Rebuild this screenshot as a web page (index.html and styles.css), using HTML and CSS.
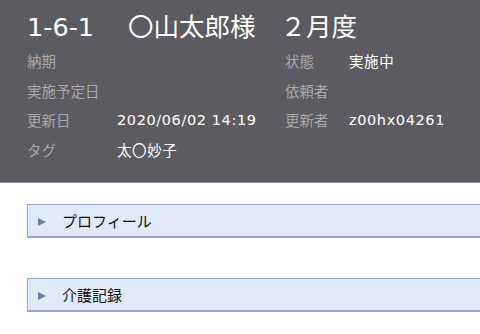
FILE: index.html
```html
<!DOCTYPE html>
<html lang="ja">
<head>
<meta charset="utf-8">
<link rel="stylesheet" href="styles.css">
</head>
<body>
<header class="head">
  <h1 class="title"><span class="t-id">1-6-1</span><span class="t-name">〇山太郎様</span><span class="t-month">２月度</span></h1>
  <div class="grid">
    <span class="lbl">納期</span><span class="val"></span>
    <span class="lbl">状態</span><span class="val">実施中</span>
    <span class="lbl">実施予定日</span><span class="val"></span>
    <span class="lbl">依頼者</span><span class="val"></span>
    <span class="lbl">更新日</span><span class="val">2020/06/02 14:19</span>
    <span class="lbl">更新者</span><span class="val">z00hx04261</span>
    <span class="lbl">タグ</span><span class="val">太〇妙子</span>
    <span class="lbl"></span><span class="val"></span>
  </div>
</header>
<main class="panels">
  <div class="panel"><span class="tri"></span><span class="ptext">プロフィール</span></div>
  <div class="panel"><span class="tri"></span><span class="ptext">介護記録</span></div>
</main>
</body>
</html>
```
FILE: styles.css
```css
html, body {
  margin: 0;
  padding: 0;
  overflow: hidden;
  background: #ffffff;
  font-family: "DejaVu Sans", "Noto Sans CJK JP", sans-serif;
}
.head {
  background: #5b5b61;
  border-bottom: 1px solid #8c8c90;
  padding: 9px 0 13px 27px;
  height: 160px;
}
.title {
  margin: 0 0 1px 0;
  font-size: 25.5px;
  font-weight: normal;
  line-height: 36px;
  color: #ffffff;
  white-space: nowrap;
  display: flex;
}
.t-name {
  margin-left: 34px;
}
.t-month {
  margin-left: 25px;
}
.grid {
  display: grid;
  grid-template-columns: 90px 168px 64px 1fr;
  grid-auto-rows: 29.5px;
  align-items: center;
  font-size: 14.5px;
}
.lbl {
  color: #a8a8ac;
  white-space: nowrap;
}
.val {
  color: #ffffff;
  white-space: nowrap;
  letter-spacing: 0.6px;
}
.panels {
  padding: 21px 0 0 27px;
  display: flex;
  flex-direction: column;
  gap: 40px;
}
.panel {
  margin-right: -10px;
  height: 31px;
  background: #e2e9f6;
  border-top: 1px solid #93a8d3;
  border-left: 1px solid #93a8d3;
  border-bottom: 2px solid #95a7cf;
  display: flex;
  align-items: center;
  padding-left: 10px;
  gap: 16px;
}
.tri {
  width: 0;
  height: 0;
  border-top: 4.5px solid transparent;
  border-bottom: 4.5px solid transparent;
  border-left: 8px solid #6e7fa3;
  margin-top: 2px;
}
.ptext {
  font-size: 15px;
  color: #111111;
}
```
